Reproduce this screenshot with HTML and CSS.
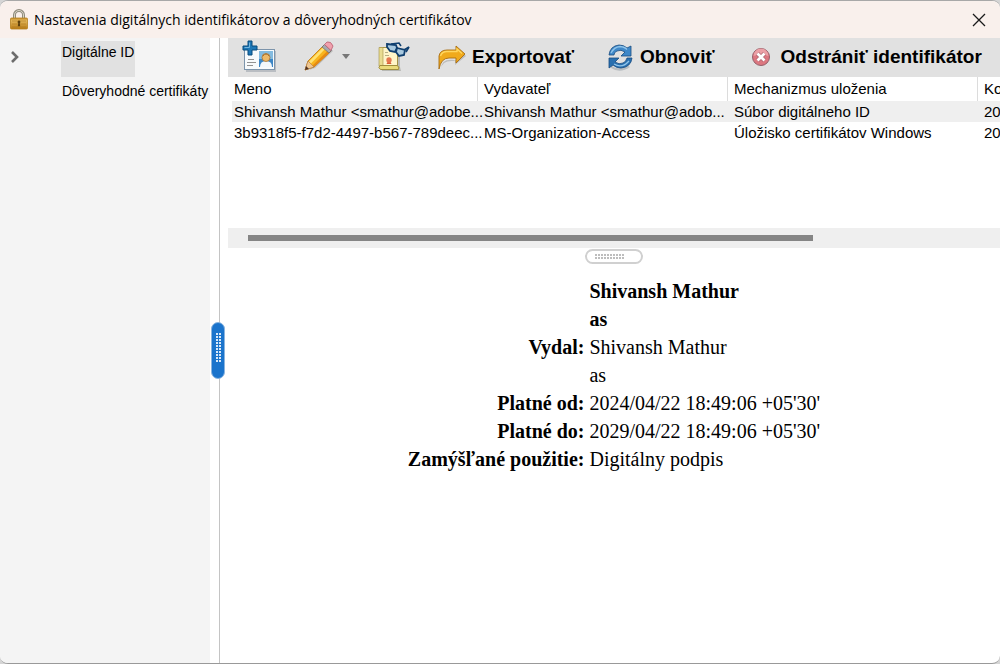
FILE: index.html
```html
<!DOCTYPE html>
<html lang="sk">
<head>
<meta charset="utf-8">
<title>Nastavenia digitálnych identifikátorov a dôveryhodných certifikátov</title>
<link rel="stylesheet" href="styles.css">
</head>
<body>
<div class="window">
  <header class="titlebar">
    <svg class="lock" width="20" height="22" viewBox="0 0 20 22" aria-hidden="true">
      <defs>
        <linearGradient id="brass" x1="0" y1="0" x2="0" y2="1"><stop offset="0" stop-color="#c98f2c"/><stop offset=".25" stop-color="#e3b75a"/><stop offset="1" stop-color="#b87a14"/></linearGradient>
      </defs>
      <path d="M5.500 11V6a4.500 4.500 0 0 1 9 0v5" fill="none" stroke="#8e8a7c" stroke-width="3"/>
      <path d="M5.500 11V6a4.500 4.500 0 0 1 9 0v5" fill="none" stroke="#dad6c8" stroke-width="1"/>
      <rect x="1.500" y="9" width="17" height="11" rx="1" fill="url(#brass)" stroke="#b5811f" stroke-width=".8"/>
      <path d="M3 12h14M3 15h14M3 18h14" stroke="#b07a20" stroke-width=".6"/>
      <path d="M10 11.500a1.500 1.500 0 0 1 .8 2.700l.4 3H8.800l.4-3a1.500 1.500 0 0 1 .8-2.700z" fill="#5d400c"/>
    </svg>
    <h1 class="title">Nastavenia digitálnych identifikátorov a dôveryhodných certifikátov</h1>
    <button class="close" type="button" aria-label="Zavrieť">
      <svg width="14" height="14" viewBox="0 0 14 14"><path d="M1 1l12 12M13 1L1 13" stroke="#1a1a1a" stroke-width="1.300"/></svg>
    </button>
  </header>
  <main class="panes">
    <nav class="sidebar" aria-label="Kategórie">
      <button class="expander" type="button" aria-label="Rozbaliť">
        <svg width="10" height="12" viewBox="0 0 10 12"><path d="M2 1l5 5-5 5" fill="none" stroke="#6c6c6c" stroke-width="2.600"/></svg>
      </button>
      <div class="categories">
        <button class="category selected" type="button">Digitálne ID</button>
        <button class="category" type="button">Dôveryhodné certifikáty</button>
      </div>
    </nav>
    <div class="divider">
      <div class="grip">
        <svg width="5" height="29" viewBox="0 0 5 29"><path d="M1 0v29M4 0v29" stroke="#d9e8f8" stroke-width="2" stroke-dasharray="2 1"/></svg>
      </div>
    </div>
    <section class="content">
      <div class="toolbar">
        <button class="tool" type="button" aria-label="Pridať ID">
          <svg width="34" height="34" viewBox="0 0 34 34">
            <rect x="4" y="11" width="30" height="21" fill="#b9bdc2"/>
            <rect x="2.500" y="9.500" width="30" height="20" fill="#f7fafc" stroke="#7c94ab"/>
            <rect x="17" y="11" width="14" height="16" fill="#3c86c5"/>
            <path d="M17 11h14v8H17z" fill="#83bbe0"/>
            <path d="M18 27q0-6 6-6t6 6z" fill="#f2f7fb"/>
            <circle cx="24" cy="17.500" r="4" fill="#edb968" stroke="#a37033" stroke-width=".8"/>
            <path d="M21 16q3-4 6 0" stroke="#a77332" fill="none"/>
            <path d="M6 19.500h6M5 22.500h9M5 25.500h6" stroke="#919191"/>
            <path d="M6 1h4v5h5v4h-5v5H6v-5H1V6h5z" fill="#1d77b6" stroke="#064a7c"/>
            <path d="M7.500 2.500v5H2.500" fill="none" stroke="#72b5de"/>
          </svg>
        </button>
        <button class="tool" type="button" aria-label="Možnosti použitia" aria-haspopup="menu">
          <svg width="32" height="32" viewBox="0 0 32 32">
            <path d="M5 29L27 8l2 2L11 27z" fill="#bdbdbd"/>
            <path d="M1 29L4 20 20 4 27 10 10 26z" fill="#f8b51e" stroke="#bd7411" stroke-width=".8"/>
            <path d="M5 20.500L20 5.500l2 1.500L7 22.500z" fill="#ffe273"/>
            <path d="M8 25L25 8.500l2 1.500-17 16z" fill="#e78b12"/>
            <path d="M1 29l3-9 6 6z" fill="#efc793" stroke="#b07a42" stroke-width=".6"/>
            <path d="M1 29l1-4 3 3z" fill="#513324"/>
            <path d="M18 6l2.500-2.500 7 6L25 12z" fill="#a6a9b0" stroke="#696d76" stroke-width=".7"/>
            <path d="M20.500 3.500L23 1q4-1 6 4l-2 4.500z" fill="#f0a0ad" stroke="#b75e70" stroke-width=".8"/>
          </svg>
          <svg width="8" height="5" viewBox="0 0 8 5"><path d="M0 0h8L4 5z" fill="#777"/></svg>
        </button>
        <button class="tool" type="button" aria-label="Podrobnosti certifikátu">
          <svg width="32" height="32" viewBox="0 0 32 32">
            <path d="M4 8h18v18l1 4H4z" fill="#b8b9b5"/>
            <path d="M2 6.500h17.500V25H2z" fill="#fff5c8" stroke="#a39148"/>
            <path d="M1 6.500h4V25H1z" fill="#e9dc91" stroke="#a39148" stroke-width=".6"/>
            <path d="M2 24.500h17q3 1 1.500 4H2.500q-3-2-.5-4z" fill="#eadb7a" stroke="#a08d3d"/>
            <path d="M7 11.500h3M7 14.500h4" stroke="#b7af83"/>
            <path d="M8.500 23l1.500-3h2l1.500 3z" fill="#d95d36"/>
            <circle cx="11" cy="19" r="2.700" fill="#e57850"/>
            <path d="M9 3l9 1 1 3-2 4-5-1-3-4z" fill="#a9c9df" stroke="#103f6f" stroke-width="1.800"/>
            <path d="M19 7l8 2-1 5-5 1-3-4z" fill="#a9c9df" stroke="#103f6f" stroke-width="1.800"/>
            <path d="M13 3l8-1 2 3M26 9l5-3-3 5" fill="none" stroke="#103f6f" stroke-width="1.600"/>
          </svg>
        </button>
        <button class="tool" type="button">
          <svg width="28" height="28" viewBox="0 0 28 28">
            <path d="M3 26Q3 15 17 17v5l11-9-2-2L16 18q-12-1-13 8z" fill="#bcbcbc"/>
            <path d="M1 26V13Q2 7 9 7h9V3l9 8-9 9v-5h-7Q3 15 1 26z" fill="#f0aa1c"/>
            <path d="M1 26V13Q2 7 9 7h9V3l9 8-9 9v-5h-7Q3 15 1 26" fill="none" stroke="#a86d13" stroke-width=".9" stroke-linejoin="round"/>
            <path d="M2.500 13Q4 8.500 9 8.500h10V6l5 4.500" fill="none" stroke="#ffd75f" stroke-width="1.400"/>
          </svg>
          <span>Exportovať</span>
        </button>
        <button class="tool" type="button">
          <svg width="32" height="28" viewBox="0 0 32 28">
            <path d="M8 21q7 8 17 1l3 2q-10 7-19 1z" fill="#b8bdc1"/>
            <path d="M7 12Q8 3 17 2q5 0 8 3l4-2v10H19l4-4q-4-3-8-1-3 1-3 4z" fill="#3f88c8" stroke="#164b82" stroke-width=".8"/>
            <path d="M30 15q-1 9-11 10-5 0-8-3l-4 3V15h10l-4 4q4 3 8 1 3-1 4-5z" fill="#286faf" stroke="#164b82" stroke-width=".8"/>
            <path d="M9 10q3-6 9-6.500 5 .5 7 3M12 21q8 5 15-3" fill="none" stroke="#8fc4ea" stroke-width="1.300"/>
          </svg>
          <span>Obnoviť</span>
        </button>
        <button class="tool" type="button">
          <svg width="32" height="28" viewBox="0 0 32 28">
            <circle cx="18" cy="14" r="8.500" fill="#dc7780" stroke="#94606a"/>
            <path d="M10.500 13a7.500 7.500 0 0 1 15 0q-8-3-15 0z" fill="#eba0a6"/>
            <path d="M14.500 10.500l7 7m0-7l-7 7" stroke="#a9606b" stroke-width="4"/>
            <path d="M14.500 10.500l7 7m0-7l-7 7" stroke="#fff" stroke-width="2.800"/>
          </svg>
          <span>Odstrániť identifikátor</span>
        </button>
      </div>
      <div class="list">
        <table class="ids">
          <thead>
            <tr><th>Meno</th><th>Vydavateľ</th><th>Mechanizmus uloženia</th><th>Ko</th></tr>
          </thead>
          <tbody>
            <tr class="selected"><td>Shivansh Mathur &lt;smathur@adobe...</td><td>Shivansh Mathur &lt;smathur@adob...</td><td>Súbor digitálneho ID</td><td>20</td></tr>
            <tr><td>3b9318f5-f7d2-4497-b567-789deec...</td><td>MS-Organization-Access</td><td>Úložisko certifikátov Windows</td><td>20</td></tr>
          </tbody>
        </table>
      </div>
      <div class="scrollbar"><div class="thumb"></div></div>
      <div class="splitter">
        <svg width="29" height="5" viewBox="0 0 29 5"><path d="M0 1h29M0 4h29" stroke="#bdbdbd" stroke-width="2" stroke-dasharray="2 1"/></svg>
      </div>
      <table class="details">
        <tbody>
          <tr><th></th><td><strong>Shivansh Mathur</strong></td></tr>
          <tr><th></th><td><strong>as</strong></td></tr>
          <tr><th scope="row">Vydal:</th><td>Shivansh Mathur</td></tr>
          <tr><th></th><td>as</td></tr>
          <tr><th scope="row">Platné od:</th><td>2024/04/22 18:49:06 +05'30'</td></tr>
          <tr><th scope="row">Platné do:</th><td>2029/04/22 18:49:06 +05'30'</td></tr>
          <tr><th scope="row">Zamýšľané použitie:</th><td>Digitálny podpis</td></tr>
        </tbody>
      </table>
    </section>
  </main>
</div>
</body>
</html>
```

FILE: styles.css
```css
* {
  box-sizing: border-box;
}

body {
  margin: 0;
  background: #d5d5d5;
  color: #000;
  font: 15px/21px "Liberation Sans", Arial, sans-serif;
}

button {
  margin: 0;
  padding: 0;
  border: 0;
  background: none;
  color: inherit;
  font: inherit;
}

svg {
  display: block;
  flex: none;
}

.window {
  display: flex;
  flex-direction: column;
  min-height: 100vh;
  overflow: hidden;
  border-top: 1px solid #a8a8a8;
  border-bottom: 1px solid #999;
  border-radius: 8px;
  background: #fff;
}

.titlebar {
  display: flex;
  align-items: center;
  gap: 5px;
  height: 37px;
  padding: 0 14px 0 9px;
  background: #f9f0ec;
}

.title {
  flex: 1;
  margin: 0;
  font: 14px/20px "Open Sans", "Noto Sans", sans-serif;
}

.panes {
  display: flex;
  flex: 1;
}

.sidebar {
  display: flex;
  flex: none;
  width: 210px;
  overflow: hidden;
  background: #f4f4f4;
}

.expander {
  flex: none;
  align-self: flex-start;
  width: 61px;
  padding: 13px 10px;
}

.categories {
  display: flex;
  flex-direction: column;
  align-items: flex-start;
  gap: 3px;
  padding-top: 3px;
}

.category {
  height: 36px;
  padding: 0 1px 14px;
  font-size: 14px;
  white-space: nowrap;
}

.category.selected {
  background: #e1e1e1;
}

.divider {
  display: flex;
  flex: none;
  align-items: center;
  justify-content: center;
  width: 18px;
  background: linear-gradient(#c4c4c4, #c4c4c4) 9px 0 / 1px 100% no-repeat;
}

.grip {
  display: flex;
  justify-content: center;
  width: 14px;
  height: 57px;
  margin-right: 2px;
  padding-top: 10px;
  border: 1px solid #8bb5e0;
  border-radius: 7px;
  background: #1b74cc;
}

.content {
  display: flex;
  flex: 1;
  flex-direction: column;
  min-width: 0;
}

.toolbar {
  display: flex;
  align-items: center;
  gap: 28px;
  height: 39px;
  padding: 0 0 2px 14px;
  overflow: hidden;
  background: #e1e1e1;
}

.tool {
  display: flex;
  align-items: center;
  gap: 6px;
  font-size: 19px;
  font-weight: bold;
  white-space: nowrap;
}

.list {
  height: 151px;
  overflow: hidden;
}

.ids {
  width: 1000px;
  border-spacing: 0;
  table-layout: fixed;
}

.ids th,
.ids td {
  height: 21px;
  padding: 0 0 0 6px;
  font-weight: normal;
  text-align: left;
  white-space: nowrap;
}

.ids th {
  height: 24px;
  padding-bottom: 2px;
  background: linear-gradient(#dcdcdc, #dcdcdc) 100% 0 / 1px 100% no-repeat;
}

.ids .selected td {
  background: #efefef;
}

.ids .selected td:first-child {
  border-left: 4px solid #fff;
  padding-left: 2px;
}

.scrollbar {
  height: 20px;
  padding: 7px 187px 7px 20px;
  background: #efefef;
}

.thumb {
  height: 6px;
  background: #858585;
}

.splitter {
  display: flex;
  align-self: center;
  align-items: center;
  width: 58px;
  height: 15px;
  margin-top: 1px;
  padding-left: 8px;
  border: 2px solid #d0d0d0;
  border-radius: 8px;
  background: #fff;
}

.details {
  align-self: center;
  margin-top: 13px;
  border-collapse: collapse;
  font: 20px/28px "Liberation Serif", "Times New Roman", serif;
}

.details th,
.details td {
  height: 28px;
  padding: 0;
  text-align: left;
  white-space: nowrap;
}

.details th {
  padding-right: 5px;
  text-align: right;
}
```
